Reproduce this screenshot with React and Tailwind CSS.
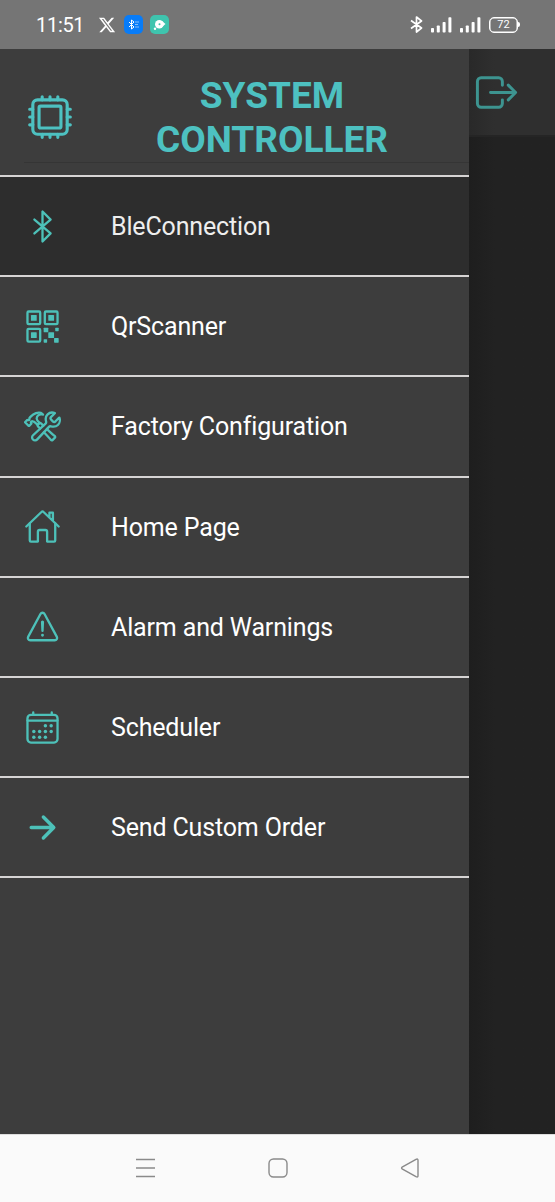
import React from "react";
import {
  IoHardwareChipOutline,
  IoBluetoothOutline,
  IoQrCodeOutline,
  IoConstructOutline,
  IoHomeOutline,
  IoWarningOutline,
  IoArrowForward,
  IoExitOutline,
} from "react-icons/io5";
import { FaXTwitter } from "react-icons/fa6";

function CalendarIcon() {
  const dots = [
    [296, 232], [376, 232],
    [136, 312], [216, 312], [296, 312], [376, 312],
    [136, 392], [216, 392], [296, 392],
  ];
  return (
    <svg viewBox="0 0 512 512" className="size-[37px]" fill="none" stroke="currentColor" strokeWidth="32" strokeLinejoin="round" strokeLinecap="round">
      <rect x="48" y="80" width="416" height="384" rx="48" />
      <path d="M128 48v32M384 48v32M464 160H48" />
      {dots.map(([x, y]) => (
        <circle key={`${x}-${y}`} cx={x} cy={y} r="24" fill="currentColor" stroke="none" />
      ))}
    </svg>
  );
}

const items = [
  { label: "BleConnection", icon: <IoBluetoothOutline size={37} />, active: true },
  { label: "QrScanner", icon: <IoQrCodeOutline size={37} /> },
  { label: "Factory Configuration", icon: <IoConstructOutline size={37} /> },
  { label: "Home Page", icon: <IoHomeOutline size={37} /> },
  { label: "Alarm and Warnings", icon: <IoWarningOutline size={37} /> },
  { label: "Scheduler", icon: <CalendarIcon /> },
  { label: "Send Custom Order", icon: <IoArrowForward size={37} /> },
];

function Signal() {
  return (
    <svg viewBox="0 0 21 16" className="h-4 w-[21px]" fill="currentColor">
      <rect x="0" y="11" width="3" height="4.5" rx="0.8" />
      <rect x="5.8" y="8.5" width="3" height="7" rx="0.8" />
      <rect x="11.6" y="5" width="3" height="10.5" rx="0.8" />
      <rect x="17.4" y="0.2" width="3" height="15.3" rx="0.8" />
    </svg>
  );
}

function StatusBar() {
  return (
    <header className="flex h-[49px] shrink-0 items-center bg-[#757575] pl-9 pr-[35px] text-white">
      <span className="w-[62px] text-[20px] tracking-[-0.3px]">11:51</span>
      <FaXTwitter className="size-[18px]" />
      <span className="ml-2 flex size-[19px] items-center justify-center rounded-[5px] bg-[#087cf8]">
        <svg viewBox="0 0 19 19" className="size-[19px]" fill="none" stroke="#fff" strokeWidth="1">
          <path d="M5 7l5 5-2.500 2V5l2.500 2-5 5" />
          <path d="M11 7h4M11 9.500h3M11 12h4" opacity="0.5" />
        </svg>
      </span>
      <span className="ml-[7px] flex size-[19px] items-center justify-center rounded-[5px] bg-[#3fc4ae]">
        <svg viewBox="0 0 19 19" className="size-[19px]" fill="#fff">
          <circle cx="9.300" cy="9.200" r="4.300" />
          <path d="M12 6l3.500 3-3.500 3z" />
          <circle cx="5" cy="13.800" r="1.200" />
          <circle cx="9.500" cy="9.200" r="1" fill="#3fc4ae" />
        </svg>
      </span>
      <div className="ml-auto flex items-center">
        <svg viewBox="0 0 13 17" className="mr-2 h-[17px] w-[13px]" fill="none" stroke="currentColor" strokeWidth="1.700" strokeLinejoin="round">
          <path d="M1 4.500l10.500 7.500-5 4V1l5 4L1 12.500" />
        </svg>
        <Signal />
        <span className="w-2" />
        <Signal />
        <span className="ml-2 flex h-4 w-[29px] items-center justify-center rounded-[5px] border-[1.500px] border-white text-[11px] leading-none shadow-[inset_0_0_0_0.500px_white]">72</span>
        <span className="h-[5px] w-[2px] rounded-r bg-white" />
      </div>
    </header>
  );
}

export default function App() {
  return (
    <div className="flex h-[1202px] w-[555px] flex-col overflow-hidden bg-[#222222] font-[Roboto,sans-serif]">
      <StatusBar />
      <main className="flex min-h-0 flex-1">
        <aside className="flex w-[468.500px] shrink-0 flex-col bg-[#3d3d3d]">
          <div className="flex h-[128px] shrink-0 flex-col border-b-2 border-[#d6d4d4]">
            <div className="ml-6 flex h-[113.500px] items-center border-b border-[#353535] pt-6">
              <IoHardwareChipOutline size={50} className="ml-px shrink-0 text-[#4dc1c1]" />
              <h1 className="ml-[77px] w-[240px] pt-px text-center text-[37px] font-bold leading-[44px] text-[#4dc1c1]">
                SYSTEM CONTROLLER
              </h1>
            </div>
          </div>
          <nav>
            {items.map(({ label, icon, active }) => (
              <a
                key={label}
                className={`flex h-[100.200px] items-center border-b-2 border-[#d6d4d4] pl-6 ${active ? "bg-[#2d2d2d] text-[#eeeeee]" : "text-white"}`}
              >
                <span className="flex w-[87px] text-[#4dc1b9]">{icon}</span>
                <span className="pt-px text-[25px] leading-none tracking-[-0.150px]">{label}</span>
              </a>
            ))}
          </nav>
        </aside>
        <section className="flex-1 bg-linear-to-r from-[#1e1e1e] to-[#222222] to-30%">
          <div className="flex h-[88px] items-center border-b-2 border-[#252525] bg-linear-to-r from-[#292929] to-[#2f2f2f] to-30% pl-1">
            <IoExitOutline size={47} className="text-[#3d9490]" />
          </div>
        </section>
      </main>
      <footer className="flex h-[68px] shrink-0 items-center justify-center border-t border-[#dddddd] bg-[#fafafa] pb-0.5 text-[#8a8a8a]">
        <svg viewBox="0 0 286 22" className="h-[22px] w-[286px]" fill="none" stroke="currentColor" strokeWidth="1.400" strokeLinejoin="round">
          <path d="M1 2.500h19M1 11h19M1 19.500h19" />
          <rect x="134" y="2" width="18" height="18" rx="4.500" />
          <path d="M267.500 9.800l13.500-7.500q2-1 2 1v15.400q0 2-2 1l-13.500-7.500q-1.800-1.200 0-2.400z" />
        </svg>
      </footer>
    </div>
  );
}
